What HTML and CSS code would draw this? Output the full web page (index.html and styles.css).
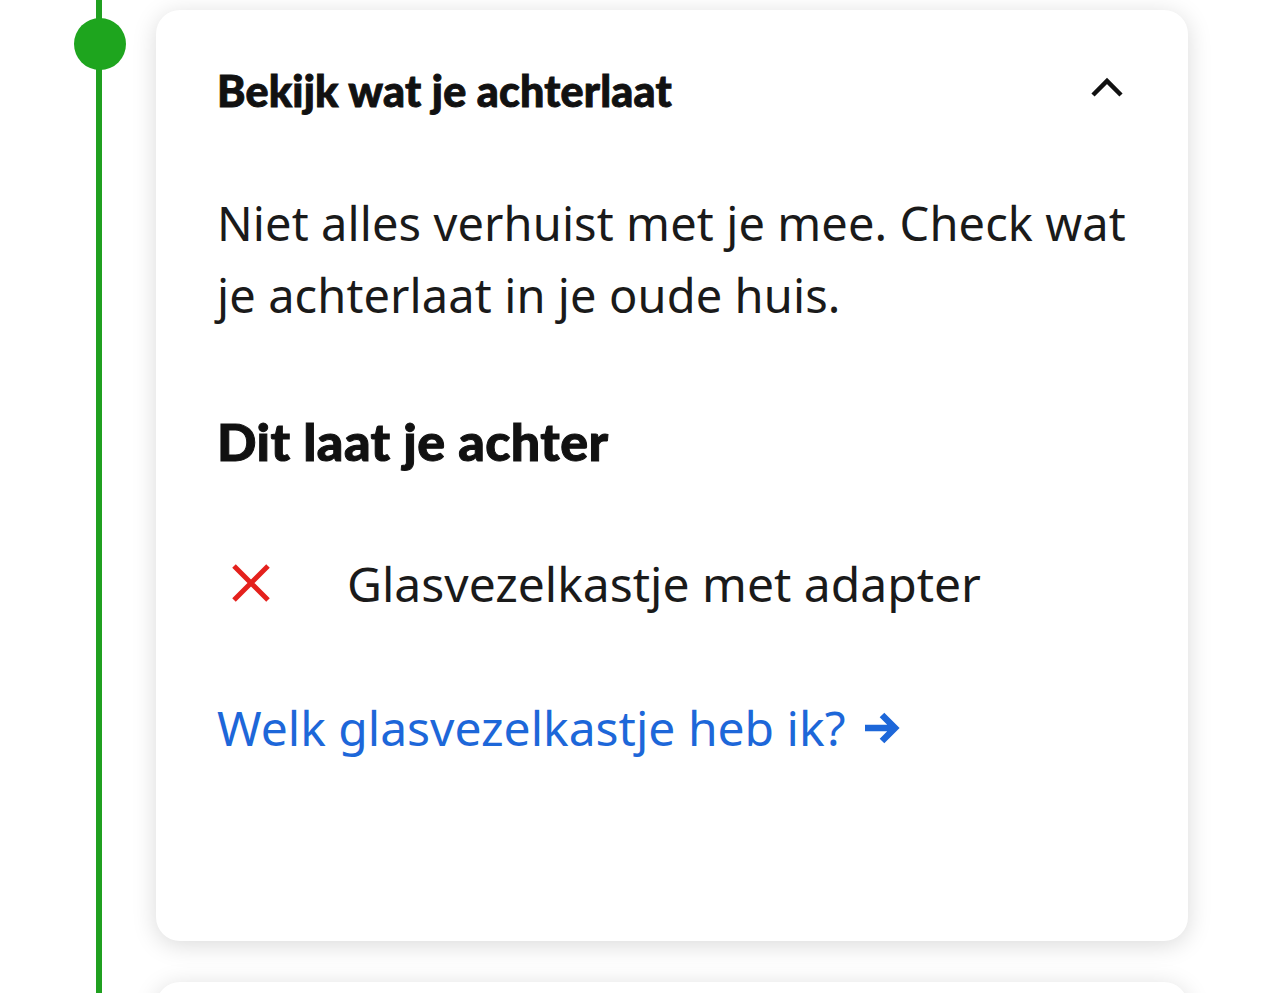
FILE: index.html
```html
<!DOCTYPE html>
<html lang="nl">
<head>
<meta charset="utf-8">
<link rel="stylesheet" href="styles.css">
</head>
<body>
<div class="page">
  <div class="track">
    <span class="dot"></span>
  </div>
  <div class="cards">
    <section class="card">
      <div class="card-head">
        <h2 class="card-title">Bekijk wat je achterlaat</h2>
        <svg class="chevron" width="32" height="24" viewBox="0 0 32 24"><path d="M2 20 L16 6 L30 20" fill="none" stroke="#111" stroke-width="4.5"/></svg>
      </div>
      <p class="intro">Niet alles verhuist met je mee. Check wat je achterlaat in je oude huis.</p>
      <h3 class="sub">Dit laat je achter</h3>
      <ul class="items">
        <li class="item">
          <svg class="x" width="40" height="40" viewBox="0 0 40 40"><path d="M3 3 L37 37 M37 3 L3 37" stroke="#e4211d" stroke-width="5"/></svg>
          <span>Glasvezelkastje met adapter</span>
        </li>
      </ul>
      <a class="link" href="#">Welk glasvezelkastje heb ik?<svg class="arrow" width="38" height="34" viewBox="0 0 38 34"><path d="M2 17 H31 M19 4 L32 17 L19 30" fill="none" stroke="#1d67d9" stroke-width="6.5"/></svg></a>
    </section>
    <section class="card card-next"></section>
  </div>
</div>
</body>
</html>
```
FILE: styles.css
```css
html, body {
  margin: 0;
  padding: 0;
  background: #fff;
}
body {
  font-family: "Noto Sans", "Open Sans", sans-serif;
  color: #1a1a1a;
  overflow: hidden;
  height: 993px;
}
.page {
  display: flex;
  width: 1284px;
  height: 993px;
  overflow: hidden;
}
.track {
  width: 156px;
  flex-shrink: 0;
  min-height: 993px;
  background: linear-gradient(to right, transparent 96px, #20a020 96px, #20a020 102px, transparent 102px);
  display: flex;
  flex-direction: column;
  align-items: flex-start;
}
.dot {
  display: block;
  width: 52px;
  height: 52px;
  border-radius: 50%;
  background: #1ea51e;
  margin: 18px 0 0 74px;
}
.cards {
  width: 1032px;
  padding-top: 10px;
  display: flex;
  flex-direction: column;
  gap: 41px;
}
.card {
  background: #fff;
  border-radius: 24px;
  box-shadow: 0 4px 24px rgba(0,0,0,0.15);
  padding: 0 61px;
  height: 931px;
  flex-shrink: 0;
  box-sizing: border-box;
}
.card-next {
  height: 100px;
}
.card-head {
  display: flex;
  justify-content: space-between;
  align-items: center;
  height: 160px;
}
.card-title {
  margin: 0;
  font-family: Lato, sans-serif;
  font-weight: 900;
  font-size: 43px;
  color: #111;
  -webkit-text-stroke: 0.9px #111;
  letter-spacing: 0.2px;
}
.chevron {
  margin: 0 4px 6px 0;
}
.intro {
  margin: 17px -20px 0 0;
  font-size: 47px;
  letter-spacing: 0.1px;
  line-height: 72px;
  color: #1a1a1a;
}
.sub {
  margin: 79px 0 0;
  font-family: Lato, sans-serif;
  font-weight: 900;
  font-size: 52px;
  color: #111;
  -webkit-text-stroke: 1px #111;
  letter-spacing: 0.4px;
}
.items {
  list-style: none;
  margin: 39px 0 0;
  padding: 0;
}
.item {
  display: flex;
  align-items: center;
  height: 144px;
  font-size: 48px;
  gap: 76px;
}
.x {
  margin-left: 14px;
  flex-shrink: 0;
}
.link {
  display: inline-flex;
  align-items: center;
  gap: 18px;
  margin-top: 40px;
  font-size: 48px;
  color: #1d67d9;
  text-decoration: none;
}
```
